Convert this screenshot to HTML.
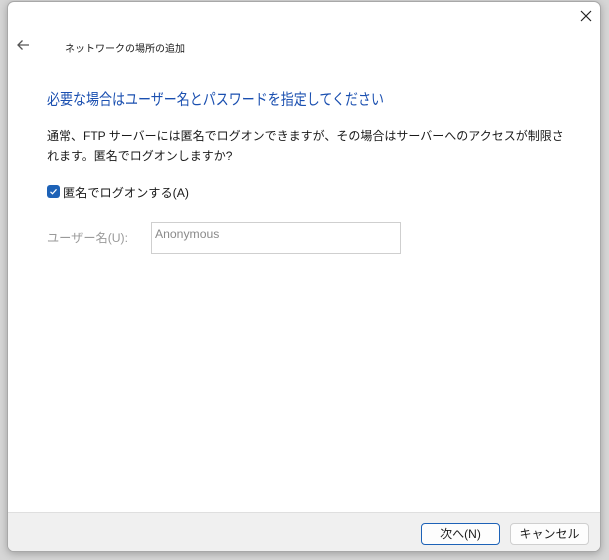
<!DOCTYPE html>
<html><head><meta charset="utf-8"><style>
*{margin:0;padding:0;box-sizing:border-box}
body{width:609px;height:560px;background:#d6d6d6;font-family:"Liberation Sans","Noto Sans CJK JP",sans-serif;position:relative;overflow:hidden}
.win{position:absolute;left:7px;top:1px;width:594px;height:551px;background:#fff;border:1px solid #a8a8a8;border-radius:7px;overflow:hidden;box-shadow:0 2px 8px rgba(0,0,0,.25)}
.foot{position:absolute;left:0;right:0;top:510px;bottom:0;background:#f0f0f0;border-top:1px solid #dfdfdf}
.t{position:absolute;white-space:nowrap}
.btn{position:absolute;top:10px;width:79px;height:22px;border:1px solid #cfcfcf;border-radius:4px;background:#fdfdfd;font-size:12px;text-align:center;line-height:20px;color:#1a1a1a}
</style></head><body>
<div class="win">
 <svg style="position:absolute;left:572px;top:8px" width="12" height="12"><path d="M1 1L11 11M11 1L1 11" stroke="#222" stroke-width="1.2"/></svg>
 <svg style="position:absolute;left:8px;top:37px" width="14" height="12"><path d="M13 6H2M6.5 1.5L2 6l4.5 4.5" stroke="#555" stroke-width="1.3" fill="none"/></svg>
 <div class="t" style="left:57px;top:38px;font-size:10px;color:#1a1a1a">ネットワークの場所の追加</div>
 <div class="t" style="left:39px;top:85px;font-size:13px;color:#1a4fb0;transform:scaleY(1.18);transform-origin:0 0">必要な場合はユーザー名とパスワードを指定してください</div>
 <div class="t" style="left:39px;top:124px;font-size:12px;line-height:20px;color:#1a1a1a">通常、FTP サーバーには匿名でログオンできますが、その場合はサーバーへのアクセスが制限さ<br>れます。匿名でログオンしますか?</div>
 <div style="position:absolute;left:39px;top:183px;width:13px;height:13px;background:#1d62b7;border-radius:3px"><svg width="13" height="13"><path d="M3.5 6.8l2 2 4-4.5" stroke="#fff" stroke-width="1.2" fill="none"/></svg></div>
 <div class="t" style="left:55px;top:181px;font-size:12.2px;color:#1a1a1a">匿名でログオンする(A)</div>
 <div class="t" style="left:39px;top:226px;font-size:12.2px;color:#9a9a9a">ユーザー名(U):</div>
 <div style="position:absolute;left:143px;top:220px;width:250px;height:32px;border:1px solid #cfcfcf;background:#fff"><div class="t" style="left:3px;top:4px;font-size:12.2px;color:#8a8a8a">Anonymous</div></div>
 <div class="foot">
  <div class="btn" style="left:413px;border:1px solid #1d62b7">次へ(N)</div>
  <div class="btn" style="left:502px">キャンセル</div>
 </div>
</div>
</body></html>
